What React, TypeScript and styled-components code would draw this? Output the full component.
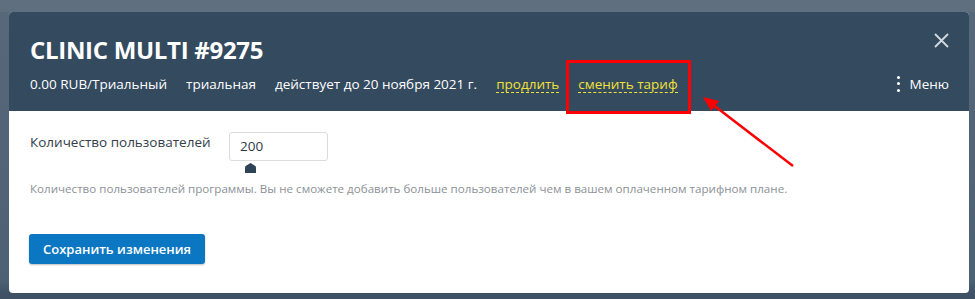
import React from "react";
import styled, { createGlobalStyle } from "styled-components";

const Global = createGlobalStyle`
  html, body { margin: 0; padding: 0; }
  body {
    background: #5c6c7d;
    font-family: "Open Sans", "Noto Sans", sans-serif;
    width: 975px;
    height: 299px;
    overflow: hidden;
  }
  svg { display: block; }
`;

const Backdrop = styled.div`
  position: relative;
  width: 975px;
  height: 299px;
  box-sizing: border-box;
  padding: 12px 6px 6px 9px;
  background: linear-gradient(180deg, #5f6f80 0px, #5f6f80 12px, #56687a 12px, #4e6073 280px, #3f5164 293px);
`;

const Modal = styled.div`
  width: 960px;
  height: 281px;
  border-radius: 4px;
  overflow: hidden;
  background: #ffffff;
  display: flex;
  flex-direction: column;
`;

const Header = styled.div`
  position: relative;
  background: #344a5f;
  height: 99px;
  box-sizing: border-box;
  padding: 22px 20px 0 21px;
  display: flex;
  flex-direction: column;
`;

const Title = styled.h1`
  margin: 0;
  color: #ffffff;
  font-family: "Open Sans", sans-serif;
  font-weight: 700;
  font-size: 24px;
  line-height: 32px;
  letter-spacing: -0.3px;
`;

const CloseButton = styled.button`
  position: absolute;
  top: 19px;
  right: 19px;
  width: 18px;
  height: 18px;
  padding: 0;
  border: 0;
  background: none;
  display: flex;
  align-items: center;
  justify-content: center;
`;

const InfoRow = styled.div`
  margin-top: 8px;
  display: flex;
  align-items: center;
  gap: 19px;
  font-size: 13.5px;
  line-height: 18px;
  color: #ffffff;
`;

const InfoText = styled.span`
  white-space: nowrap;
`;

const LinkText = styled.span`
  color: #f2e13a;
  white-space: nowrap;
  border-bottom: 1px dashed #f2e13a;
  line-height: 16px;
  margin-top: 2px;
`;

const Spacer = styled.div`
  flex: 1;
`;

const MenuButton = styled.div`
  display: flex;
  align-items: center;
  gap: 10px;
  color: #ffffff;
  white-space: nowrap;
`;

const Dots = styled.span`
  display: flex;
  flex-direction: column;
  gap: 3.5px;
  span {
    width: 3px;
    height: 3px;
    border-radius: 50%;
    background: #ffffff;
  }
`;

const Body = styled.div`
  padding: 21px 20px 0 21px;
  display: flex;
  flex-direction: column;
`;

const FieldRow = styled.div`
  display: flex;
  align-items: flex-start;
`;

const Label = styled.label`
  width: 199px;
  font-size: 13.5px;
  line-height: 18px;
  padding-top: 1px;
  color: #333e4a;
`;

const InputWrap = styled.div`
  position: relative;
`;

const Input = styled.div`
  width: 99px;
  height: 29px;
  box-sizing: border-box;
  border: 1px solid #d8dcdf;
  border-radius: 3px;
  padding: 0 0 0 10px;
  font-size: 13.5px;
  line-height: 27px;
  color: #2e3b48;
`;

const Handle = styled.div`
  position: absolute;
  left: 16px;
  top: 31px;
  width: 11px;
  height: 10px;
`;

const Help = styled.p`
  margin: 20px 0 0;
  font-size: 11.6px;
  line-height: 16px;
  color: #8c9197;
  white-space: nowrap;
`;

const SaveButton = styled.button`
  margin-top: 37px;
  align-self: flex-start;
  margin-left: -1px;
  width: 176px;
  height: 30px;
  border: 0;
  border-radius: 3px;
  background: #0b77c2;
  color: #ffffff;
  font-family: "Open Sans", sans-serif;
  font-weight: 600;
  font-size: 13px;
  box-shadow: 0 1px 2px rgba(0, 0, 0, 0.25);
`;

const Annotation = styled.svg`
  position: absolute;
  left: 0;
  top: 0;
  pointer-events: none;
`;

export default function App() {
  return (
    <>
      <Global />
      <Backdrop>
        <Modal>
          <Header>
            <Title>CLINIC MULTI #9275</Title>
            <CloseButton aria-label="close">
              <svg width="15" height="15" viewBox="0 0 15 15">
                <path d="M1 1 L14 14 M14 1 L1 14" stroke="#d3d9df" strokeWidth="1.8" />
              </svg>
            </CloseButton>
            <InfoRow>
              <InfoText>0.00 RUB/Триальный</InfoText>
              <InfoText>триальная</InfoText>
              <InfoText>действует до 20 ноября 2021 г.</InfoText>
              <LinkText>продлить</LinkText>
              <LinkText>сменить тариф</LinkText>
              <Spacer />
              <MenuButton>
                <Dots>
                  <span />
                  <span />
                  <span />
                </Dots>
                Меню
              </MenuButton>
            </InfoRow>
          </Header>
          <Body>
            <FieldRow>
              <Label>Количество пользователей</Label>
              <InputWrap>
                <Input>200</Input>
                <Handle>
                  <svg width="11" height="10" viewBox="0 0 11 10">
                    <path d="M0 10 V4.5 Q0 3.5 1 2.8 L5.5 0 L10 2.8 Q11 3.5 11 4.5 V10 Z" fill="#2f4356" />
                  </svg>
                </Handle>
              </InputWrap>
            </FieldRow>
            <Help>
              Количество пользователей программы. Вы не сможете добавить больше пользователей чем в вашем
              оплаченном тарифном плане.
            </Help>
            <SaveButton>Сохранить изменения</SaveButton>
          </Body>
        </Modal>
        <Annotation width="975" height="299" viewBox="0 0 975 299">
          <rect x="567.5" y="61.5" width="122" height="51" fill="none" stroke="#ff0000" strokeWidth="3" />
          <line x1="793" y1="166" x2="712" y2="104" stroke="#ff0000" strokeWidth="2.5" />
          <path d="M703 97 L719 101 L711 111 Z" fill="#ff0000" />
        </Annotation>
      </Backdrop>
    </>
  );
}
